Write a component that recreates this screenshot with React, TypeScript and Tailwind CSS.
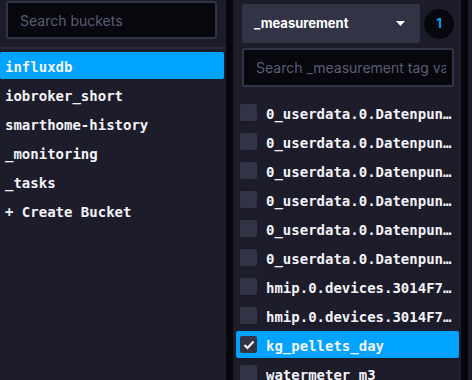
import React from "react";

const buckets = ["influxdb", "iobroker_short", "smarthome-history", "_monitoring", "_tasks", "+ Create Bucket"];

const tags: { name: string; checked?: boolean }[] = [
  { name: "0_userdata.0.Datenpunkte.Heizung.Vorlauf" },
  { name: "0_userdata.0.Datenpunkte.Heizung.Ruecklauf" },
  { name: "0_userdata.0.Datenpunkte.Strom.Verbrauch" },
  { name: "0_userdata.0.Datenpunkte.Wasser.Tag" },
  { name: "0_userdata.0.Datenpunkte.Pellets.Lager" },
  { name: "0_userdata.0.Datenpunkte.Pellets.Monat" },
  { name: "hmip.0.devices.3014F711A0000A9A49934A58.channels.1.actualTemperature" },
  { name: "hmip.0.devices.3014F711A0000A9A49934A58.channels.1.humidity" },
  { name: "kg_pellets_day", checked: true },
  { name: "watermeter_m3" },
];

const mono = { fontFamily: '"DejaVu Sans Mono", monospace' };
const sans = { fontFamily: 'Inter, "Noto Sans", sans-serif' };

export default function App() {
  return (
    <div className="w-[472px] h-[380px] flex overflow-hidden bg-[#1c1c2b]">
      {/* Left panel */}
      <div className="w-[226px] flex flex-col shrink-0">
        <div className="pt-[1px] pl-[6px] pr-[9px]">
          <div
            className="h-[38px] border-2 border-[#333346] bg-[#07070e] rounded-[2px] flex items-center pl-[12px] text-[14px] text-[#5d5e74]"
            style={sans}
          >
            Search buckets
          </div>
        </div>
        <div className="mt-[8px] h-[2px] bg-[#2b2b3b]" />
        <div className="mt-[3px] flex flex-col pr-[2px]">
          {buckets.map((b, i) => (
            <div
              key={b}
              className={
                "h-[27px] mb-[2px] flex items-center pl-[5px] rounded-[2px] " +
                (i === 0 ? "bg-[#00a3ff]" : "")
              }
            >
              <span className="pt-[4px] text-[14px] font-bold text-[#f4f4f8]" style={mono}>
                {b}
              </span>
            </div>
          ))}
        </div>
      </div>

      {/* Divider */}
      <div className="w-[7px] shrink-0 bg-[#07070e]" />

      {/* Right panel */}
      <div className="w-[228px] shrink-0 flex flex-col">
        <div className="pt-[4px] pl-[9px] flex items-center">
          <div
            className="w-[178px] h-[39px] bg-[#333346] rounded-[3px] flex items-center justify-between pl-[12px] pr-[15px]"
            style={sans}
          >
            <span className="text-[13px] font-bold text-white">_measurement</span>
            <svg width="9" height="5" viewBox="0 0 9 5">
              <path d="M0 0 L9 0 L4.5 5 Z" fill="#ffffff" />
            </svg>
          </div>
          <div
            className="ml-[4px] w-[30px] h-[30px] rounded-full bg-[#07070e] flex items-center justify-center text-[13px] font-bold text-[#00a3ff]"
            style={sans}
          >
            1
          </div>
        </div>
        <div className="pl-[9px] mt-[5px]">
          <div className="w-[212px] h-[39px] border-2 border-[#333346] bg-[#07070e] rounded-[2px] flex items-center pl-[12px] pr-[6px]">
            <span
              className="block overflow-hidden whitespace-nowrap text-[14px] text-[#5d5e74]"
              style={sans}
            >
              Search _measurement tag values
            </span>
          </div>
        </div>
        <div className="mt-[9px] h-[2px] bg-[#2b2b3b]" />
        <div className="mt-[3px] flex flex-col">
          {tags.map((t) => (
            <div
              key={t.name}
              className={
                "ml-[3px] w-[223px] h-[27px] mb-[2px] shrink-0 flex items-center pl-[4px] pr-[7px] rounded-[2px] " +
                (t.checked ? "bg-[#00a3ff]" : "")
              }
            >
              <div className="w-[17px] h-[17px] shrink-0 rounded-[2px] bg-[#333346] flex items-center justify-center">
                {t.checked && (
                  <svg width="12" height="10" viewBox="0 0 12 10">
                    <path d="M1.5 5 L4.5 8 L10.5 1.5" fill="none" stroke="#ffffff" strokeWidth="2" />
                  </svg>
                )}
              </div>
              <span
                className="ml-[9px] pt-[4px] text-[14px] font-bold text-[#f4f4f8] whitespace-nowrap overflow-hidden text-ellipsis"
                style={mono}
              >
                {t.name}
              </span>
            </div>
          ))}
        </div>
      </div>

      <div className="w-[7px] shrink-0 bg-[#07070e]" />
      <div className="flex-1" />
    </div>
  );
}
